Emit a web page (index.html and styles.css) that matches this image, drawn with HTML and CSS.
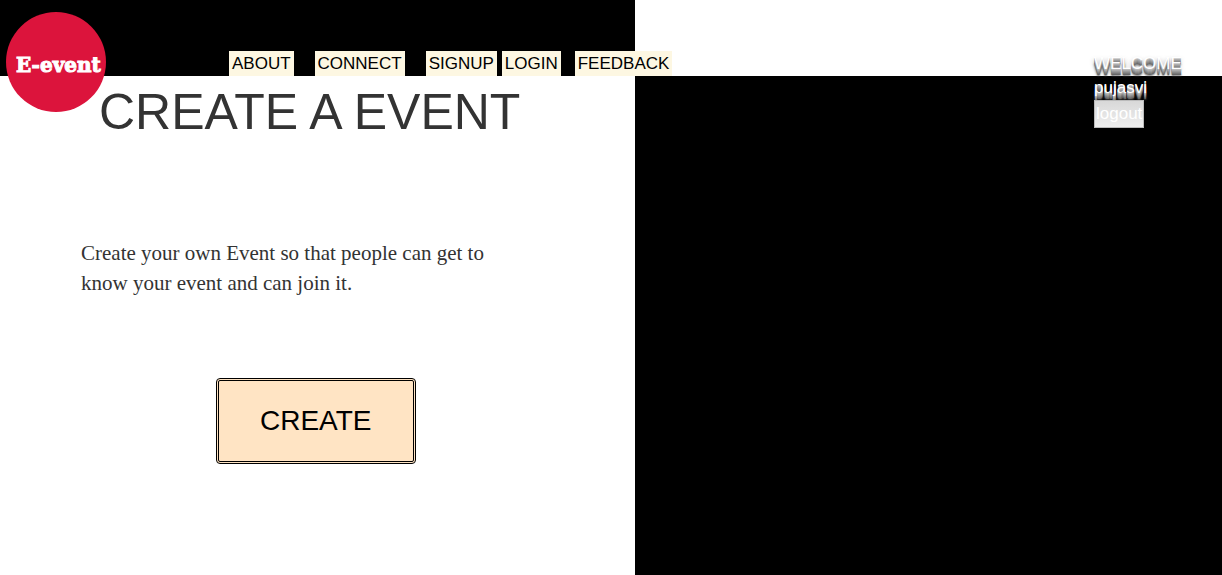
FILE: index.html
```html
<!DOCTYPE html>
<html lang="en">
<head>
<meta charset="utf-8">
<title>E-event</title>
<link rel="stylesheet" href="styles.css">
</head>
<body>
<header class="header">
  <a class="logo" href="#">E-event</a>
  <nav class="nav">
    <a class="nav-link" href="#">ABOUT</a>
    <a class="nav-link" href="#">CONNECT</a>
    <div class="nav-account">
      <a class="nav-link" href="#">SIGNUP</a>
      <a class="nav-link" href="#">LOGIN</a>
      <a class="nav-link nav-feedback" href="#">FEEDBACK</a>
    </div>
  </nav>
  <div class="user">
    <span class="raised">WELCOME</span>
    <span class="raised">pujasvi</span>
    <button class="logout" type="button">logout</button>
  </div>
</header>
<main class="main">
  <section class="create">
    <h1 class="title">CREATE A EVENT</h1>
    <p class="intro">Create your own Event so that people can get to know your event and can join it.</p>
    <button class="create-button" type="button">CREATE</button>
  </section>
  <div class="panel"></div>
</main>
</body>
</html>
```
FILE: styles.css
```css
* {
  box-sizing: border-box;
}

body {
  display: flex;
  flex-direction: column;
  min-height: 100vh;
  margin: 0;
  background: #fff;
  color: #333;
  font-family: "Liberation Sans", Arial, sans-serif;
  font-size: 17px;
}

.header {
  position: relative;
  z-index: 1;
  display: flex;
  justify-content: space-between;
  height: 76px;
  background: linear-gradient(to right, #000 52%, #fff 52%);
}

.logo {
  position: absolute;
  top: 12px;
  left: 6px;
  display: flex;
  align-items: center;
  width: 100px;
  height: 100px;
  padding: 6px 0 0 10px;
  border-radius: 50%;
  background: #dc143c;
  color: #fff;
  font: bold 20px "DejaVu Serif", serif;
  white-space: nowrap;
  text-decoration: none;
  -webkit-text-stroke: 1px #fff;
}

.nav {
  display: flex;
  align-items: flex-end;
  gap: 21px;
  padding-left: 229px;
}

.nav-account {
  display: flex;
  gap: 5px;
}

.nav-link {
  padding: 0 3px;
  background: #fdf7e2;
  color: #000;
  line-height: 25px;
  text-decoration: none;
}

.nav-feedback {
  margin-left: 9px;
}

.user {
  display: flex;
  flex-direction: column;
  align-items: flex-start;
  width: 128px;
  padding-top: 52px;
}

.raised {
  flex-shrink: 0;
  color: #fff;
  line-height: 24px;
  text-shadow: 0 1px 0 #bbb, 0 2px 0 #aaa, 0 3px 0 #999,
    0 4px 0 #888, 0 5px 0 #777, 0 6px 0 #666, 0 7px 2px #555,
    0 3px 5px rgba(0, 0, 30, 0.4);
}

.logout {
  position: relative;
  flex-shrink: 0;
  height: 28px;
  padding: 0 1px;
  border: 1px solid #bbb;
  background: linear-gradient(#d8d8d8, #efefef);
  color: #fff;
  font: inherit;
}

.main {
  display: grid;
  grid-template-columns: 52% 1fr;
  flex: 1;
}

.create {
  display: flex;
  flex-direction: column;
  align-items: center;
  padding-right: 4px;
}

.title {
  margin: 8px 0 0;
  padding-right: 12px;
  font-size: 50px;
  font-weight: 400;
  line-height: 56px;
}

.intro {
  align-self: flex-start;
  max-width: 500px;
  margin: 98px 0 0;
  padding: 0 0 0 81px;
  font-family: "Liberation Serif", "Times New Roman", serif;
  font-size: 21px;
  line-height: 30px;
}

.create-button {
  width: 200px;
  height: 86px;
  margin: 80px 0 0;
  border: 3px double #000;
  border-radius: 4px;
  background: #ffe4c4;
  color: #000;
  font: 28px "Liberation Sans", Arial, sans-serif;
}

.panel {
  background: #000;
}
```
